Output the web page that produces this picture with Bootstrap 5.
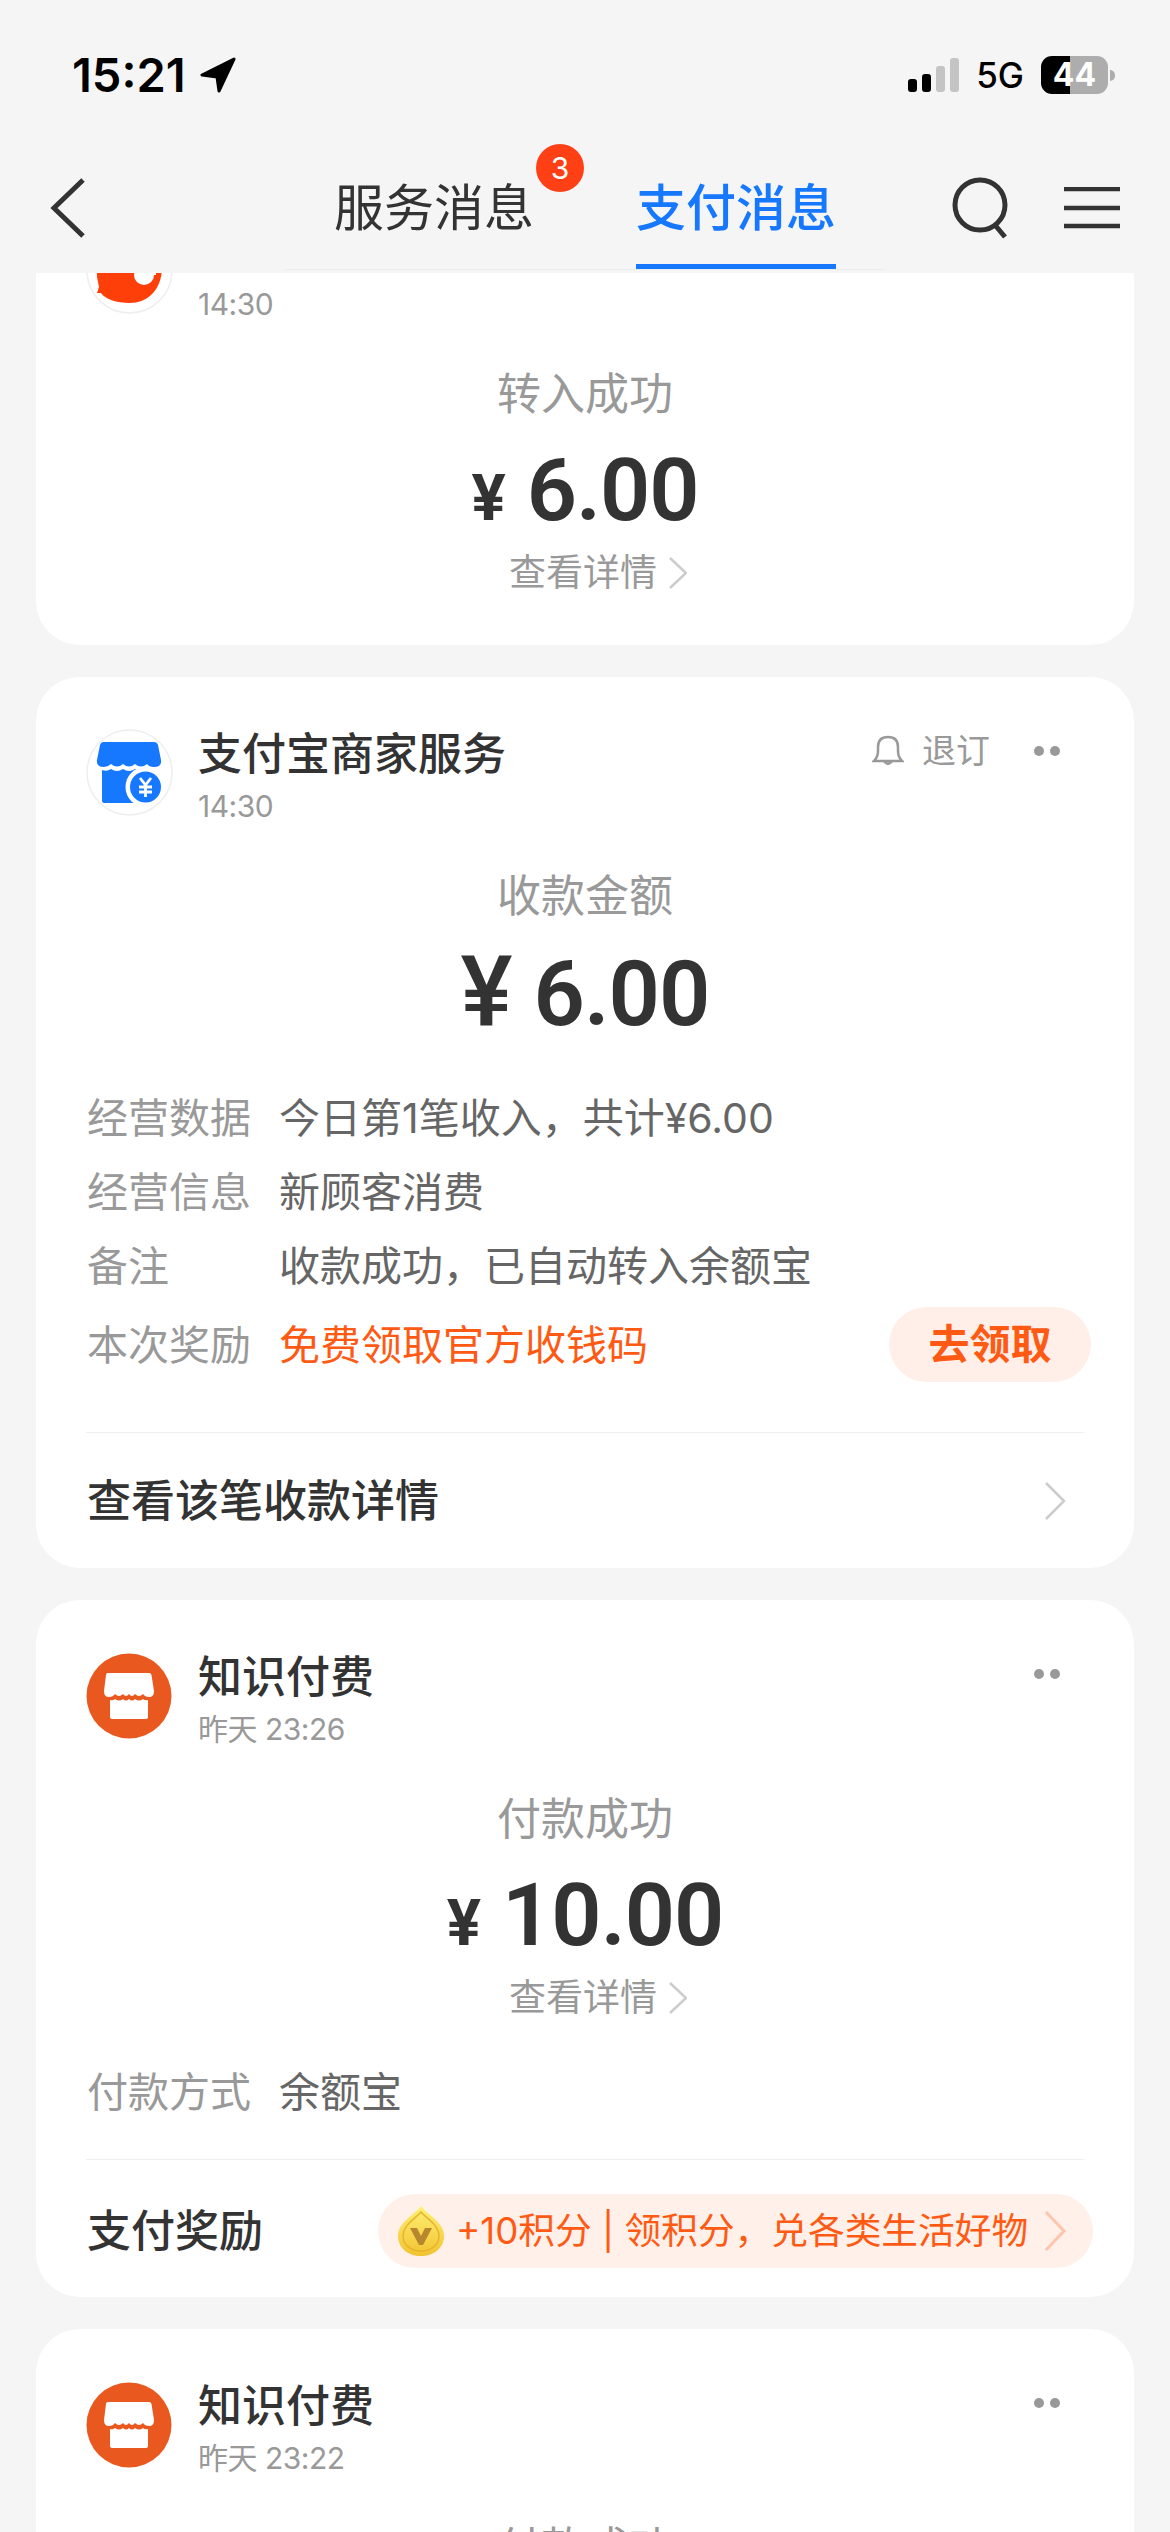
<!DOCTYPE html>
<html lang="zh-CN">
<head>
  <meta charset="UTF-8">
  <title>支付消息</title>
  <link href="https://cdn.jsdelivr.net/npm/bootstrap@5.3.0/dist/css/bootstrap.min.css" rel="stylesheet">
  <style>
    html, body {
      height: 2532px;
      overflow: hidden;
    }

    body {
      background-color: #f5f5f5;
      color: #333;
      font-family: Inter, "Noto Sans CJK SC", sans-serif;
    }

    /* status bar */
    .status-bar {
      height: 150px;
      padding: 0 55px 0 72px;
    }

    .status-time {
      font-size: 47px;
      font-weight: 600;
      color: #000;
    }

    .status-arrow {
      margin-left: 14px;
    }

    .status-net {
      font-size: 35px;
      font-weight: 500;
      color: #000;
      margin: 0 17px;
    }

    .battery {
      width: 67px;
      height: 38px;
      border-radius: 11px;
      background: linear-gradient(90deg, #000 43%, #adadad 43%);
      color: #fff;
      font-size: 32px;
      font-weight: 700;
      line-height: 38px;
      text-align: center;
    }

    .battery-cap {
      width: 5px;
      height: 11px;
      margin-left: 2px;
      background: #adadad;
      border-radius: 0 5px 5px 0;
    }

    /* top tabs */
    .top-bar {
      height: 123px;
      padding: 0 50px 8px;
      flex: none;
    }

    .top-line {
      position: absolute;
      left: 285px;
      right: 285px;
      bottom: 3px;
      height: 1px;
      background: #ececec;
    }

    .tab-group {
      position: absolute;
      left: 334px;
      top: 0;
      bottom: 0;
      gap: 102px;
    }

    .tab-item {
      font-size: 50px;
      line-height: 116px;
      height: 120px;
      font-weight: 400;
      color: #333;
      position: relative;
    }

    .tab-item.on {
      color: #1677ff;
      font-weight: 500;
      border-bottom: 6px solid #1677ff;
    }

    .tab-badge {
      position: absolute;
      left: 202px;
      top: -6px;
      width: 48px;
      height: 48px;
      border-radius: 50%;
      background: #ff3f14;
      color: #fff;
      font-size: 30px;
      font-weight: 400;
      line-height: 48px;
      text-align: center;
    }

    .top-actions {
      gap: 53px;
    }

    /* message list */
    .msg-list {
      height: 2259px;
      overflow: hidden;
      padding: 0 36px;
    }

    .msg-card {
      background: #fff;
      border-radius: 44px;
      padding: 47px 50px 0;
      margin-bottom: 32px;
    }

    .msg-card.cut {
      margin-top: -98px;
      padding-bottom: 47px;
    }

    .msg-card.tail {
      padding-bottom: 200px;
      margin-bottom: 0;
    }

    .msg-logo {
      width: 87px;
      height: 87px;
      flex: none;
      margin: 5px 25px 0 0;
    }

    .msg-title {
      font-size: 44px;
      line-height: 60px;
      font-weight: 500;
      color: #333;
      min-height: 60px;
    }

    .msg-time {
      font-size: 30px;
      line-height: 44px;
      letter-spacing: -0.5px;
      color: #999;
    }

    .msg-tools {
      color: #999;
      font-size: 34px;
      line-height: 44px;
      min-height: 44px;
      padding-right: 24px;
      margin-top: 5px;
    }

    .unsub {
      margin: 0 44px 0 18px;
    }

    .more-dots {
      gap: 6px;
    }

    .more-dots i {
      display: block;
      width: 10px;
      height: 10px;
      border-radius: 50%;
      background: #999;
    }

    .msg-head {
      font-size: 44px;
      line-height: 60px;
      color: #999;
      text-align: center;
      margin-top: 38px;
    }

    .msg-amount {
      font-family: Roboto, sans-serif;
      line-height: 110px;
      margin: 11px 0 1px;
      font-weight: 600;
      letter-spacing: -1px;
      color: #333;
      gap: 22px;
      font-size: 88px;
    }

    .msg-amount .yen {
      font-size: 64px;
      font-weight: 700;
    }

    .msg-amount.big {
      margin-bottom: -1px;
      font-size: 90px;
      gap: 22px;
    }

    .msg-amount.big .yen {
      font-size: 98px;
      font-weight: 500;
    }

    .detail-link {
      font-size: 37px;
      line-height: 50px;
      color: #999;
      gap: 12px;
      margin-top: -7px;
      padding-left: 26px;
    }

    .info-rows {
      margin-top: 32px;
    }

    .info-row {
      font-size: 41px;
      line-height: 74px;
      color: #666;
    }

    .info-label {
      width: 193px;
      flex: none;
      color: #999;
      padding-left: 1px;
    }

    .info-orange {
      color: #ff5a14;
    }

    .claim-btn {
      width: 202px;
      height: 75px;
      border-radius: 38px;
      background: #ffefe8;
      color: #ff5a14;
      font-size: 41px;
      font-weight: 700;
      line-height: 75px;
      text-align: center;
      margin-right: -7px;
    }

    .msg-foot {
      border-top: 1px solid #f0f0f0;
      color: #333;
      font-size: 44px;
      font-weight: 500;
      padding-left: 1px;
    }

    .foot-link {
      height: 136px;
      margin-top: 50px;
      padding-right: 17px;
    }

    .foot-reward {
      height: 138px;
      margin-top: 30px;
      padding-top: 4px;
    }

    .reward-pill {
      width: 715px;
      height: 74px;
      border-radius: 37px;
      background: #fff1ea;
      color: #ff5a14;
      font-size: 36.7px;
      font-weight: 400;
      padding: 0 27px 0 20px;
      margin-right: -9px;
    }

    .reward-text {
      margin-left: 12px;
    }
  </style>
</head>
<body>

<!-- Status bar -->
<div class="status-bar d-flex align-items-center justify-content-between">
  <div class="d-flex align-items-center">
    <span class="status-time">15:21</span>
    <svg class="status-arrow" width="36" height="36" viewBox="0 0 36 36"><path d="M34 2 L2 18 L17 20 L19 34 Z" fill="#000" stroke="#000" stroke-width="3" stroke-linejoin="round"/></svg>
  </div>
  <div class="d-flex align-items-center">
    <svg width="51" height="34" viewBox="0 0 51 34">
      <rect x="0" y="21" width="9" height="13" rx="3" fill="#000"/>
      <rect x="14" y="16" width="9" height="18" rx="3" fill="#000"/>
      <rect x="28" y="8" width="9" height="26" rx="3" fill="#c4c4c4"/>
      <rect x="42" y="0" width="9" height="34" rx="3" fill="#c4c4c4"/>
    </svg>
    <span class="status-net">5G</span>
    <div class="battery">44</div>
    <div class="battery-cap"></div>
  </div>
</div>

<!-- Tabs -->
<div class="top-bar d-flex align-items-center justify-content-between position-relative">
  <svg width="36" height="60" viewBox="0 0 36 60"><path d="M33 2 L4 30 L33 58" fill="none" stroke="#333" stroke-width="5"/></svg>
  <div class="tab-group d-flex">
    <div class="tab-item">服务消息<span class="tab-badge">3</span></div>
    <div class="tab-item on">支付消息</div>
  </div>
  <div class="top-actions d-flex align-items-center">
    <svg width="60" height="62" viewBox="0 0 60 62"><circle cx="29" cy="28" r="25" fill="none" stroke="#333" stroke-width="5"/><path d="M44 48 L54 60" stroke="#333" stroke-width="5" fill="none"/></svg>
    <svg width="56" height="42" viewBox="0 0 56 42"><path d="M0 2H56M0 21H56M0 39H56" stroke="#333" stroke-width="4.5" fill="none"/></svg>
  </div>
  <div class="top-line"></div>
</div>

<!-- Messages -->
<div class="msg-list">

  <div class="msg-card cut">
    <div class="d-flex">
      <svg class="msg-logo" viewBox="0 0 87 87">
        <circle cx="43.5" cy="43.5" r="42.5" fill="#fff" stroke="#eee" stroke-width="1.5"/>
        <path d="M10 0 H76 V40 C76 62 62 76 44 76 C30 76 19 72 15 66 L11 66 L13 60 L11 50 Z" fill="#ff3f0a"/>
        <circle cx="58" cy="48" r="10" fill="#fff"/>
        <path d="M50 0 H70 V48 H50 Z" fill="#fff"/>
      </svg>
      <div class="flex-grow-1">
        <div class="msg-title"></div>
        <div class="msg-time">14:30</div>
      </div>
    </div>
    <div class="msg-head">转入成功</div>
    <div class="msg-amount d-flex justify-content-center align-items-baseline"><span class="yen">¥</span><span>6.00</span></div>
    <div class="detail-link d-flex justify-content-center align-items-center">查看详情
      <svg width="18" height="32" viewBox="0 0 18 32"><path d="M1 1 L17 16 L1 31" fill="none" stroke="#ccc" stroke-width="2.5"/></svg>
    </div>
  </div>

  <div class="msg-card">
    <div class="d-flex">
      <svg class="msg-logo" viewBox="0 0 87 87">
        <circle cx="43.5" cy="43.5" r="42.5" fill="#fff" stroke="#eee" stroke-width="1.5"/>
        <path d="M17 13 H68 Q71 13 72 16 L75 31 Q76 38 68 38 Q63 38 61 35 Q55 40 49 35 Q43 40 37 35 Q31 40 25 35 Q22 38 18 38 Q10 38 11 31 L14 16 Q15 13 17 13 Z" fill="#1677ff"/>
        <path d="M16 41 Q21 43 25 40 Q31 44 37 40 Q43 44 49 40 Q55 44 61 40 L66 42 V74 H18 Q16 74 16 72 Z" fill="#1677ff"/>
        <circle cx="59.5" cy="58" r="20" fill="#fff"/>
        <circle cx="59.5" cy="58" r="15.5" fill="#1677ff"/>
        <path d="M54 49 L59.5 56 L65 49 M53 58 H66 M53 63 H66 M59.5 56 V68" fill="none" stroke="#fff" stroke-width="2.8"/>
      </svg>
      <div class="flex-grow-1">
        <div class="msg-title">支付宝商家服务</div>
        <div class="msg-time">14:30</div>
      </div>
      <div class="msg-tools d-flex align-items-center align-self-start">
        <svg width="32" height="32" viewBox="0 0 32 32"><path d="M2 26 Q6 22 6 16 V12 C6 5 10 2 16 2 C22 2 26 5 26 12 V16 Q26 22 30 26 Z M12 26 Q16 32 20 26" fill="none" stroke="#999" stroke-width="2.5"/></svg>
        <span class="unsub">退订</span>
        <div class="more-dots d-flex"><i></i><i></i></div>
      </div>
    </div>
    <div class="msg-head">收款金额</div>
    <div class="msg-amount big d-flex justify-content-center align-items-baseline"><span class="yen">¥</span><span>6.00</span></div>
    <div class="info-rows">
      <div class="info-row d-flex"><span class="info-label">经营数据</span><span>今日第1笔收入&#65292;共计¥6.00</span></div>
      <div class="info-row d-flex"><span class="info-label">经营信息</span><span>新顾客消费</span></div>
      <div class="info-row d-flex"><span class="info-label">备注</span><span>收款成功&#65292;已自动转入余额宝</span></div>
      <div class="info-row d-flex align-items-center mt-1"><span class="info-label">本次奖励</span><span class="info-orange flex-grow-1">免费领取官方收钱码</span><span class="claim-btn">去领取</span></div>
    </div>
    <div class="msg-foot foot-link d-flex align-items-center justify-content-between">
      <span>查看该笔收款详情</span>
      <svg width="24" height="40" viewBox="0 0 24 40"><path d="M3 2 L21 20 L3 38" fill="none" stroke="#ccc" stroke-width="2.5"/></svg>
    </div>
  </div>

  <div class="msg-card">
    <div class="d-flex">
      <svg class="msg-logo" viewBox="0 0 87 87"><circle cx="43" cy="44" r="42.5" fill="#e9581f"/><path d="M22 21 H63 Q65 21 65.5 23 L68 39 Q68 45 63 45 Q59 45 57 42 Q53 46 49 42 Q46 46 43 42 Q40 46 37 42 Q33 46 29 42 Q27 45 23 45 Q18 45 18 39 L20 23 Q20 21 22 21 Z M24 48 Q27 49 29 47 Q33 50 37 47 Q40 50 43 47 Q46 50 49 47 Q53 50 57 47 Q59 49 62 48 V65 Q62 67 60 67 H26 Q24 67 24 65 Z" fill="#fff"/></svg>
      <div class="flex-grow-1">
        <div class="msg-title">知识付费</div>
        <div class="msg-time">昨天 23:26</div>
      </div>
      <div class="msg-tools d-flex align-items-center align-self-start"><div class="more-dots d-flex"><i></i><i></i></div></div>
    </div>
    <div class="msg-head">付款成功</div>
    <div class="msg-amount d-flex justify-content-center align-items-baseline"><span class="yen">¥</span><span>10.00</span></div>
    <div class="detail-link d-flex justify-content-center align-items-center">查看详情
      <svg width="18" height="32" viewBox="0 0 18 32"><path d="M1 1 L17 16 L1 31" fill="none" stroke="#ccc" stroke-width="2.5"/></svg>
    </div>
    <div class="info-rows">
      <div class="info-row d-flex"><span class="info-label">付款方式</span><span>余额宝</span></div>
    </div>
    <div class="msg-foot foot-reward d-flex align-items-center justify-content-between">
      <span>支付奖励</span>
      <div class="reward-pill d-flex align-items-center">
        <svg width="46" height="50" viewBox="0 0 46 50">
          <defs><linearGradient id="coinFill" x1="0" y1="0" x2="0" y2="1"><stop offset="0" stop-color="#fff176"/><stop offset="1" stop-color="#f2c230"/></linearGradient></defs>
          <path d="M23 0 C30 9 46 16 46 30 C46 42 36 50 23 50 C10 50 0 42 0 30 C0 16 16 9 23 0 Z" fill="url(#coinFill)"/>
          <path d="M23 6 C29 13 41 19 41 30 C41 39 33 45 23 45 C13 45 5 39 5 30 C5 19 17 13 23 6 Z" fill="none" stroke="#e6b52c" stroke-width="1.5"/>
          <path d="M12 22 H19 L23 30 L27 22 H34 L25 39 H21 Z" fill="#b8862c"/>
        </svg>
        <span class="reward-text flex-grow-1">+10积分 | 领积分&#65292;兑各类生活好物</span>
        <svg width="22" height="42" viewBox="0 0 22 42"><path d="M2 2 L20 21 L2 40" fill="none" stroke="#ffc4ac" stroke-width="3"/></svg>
      </div>
    </div>
  </div>

  <div class="msg-card tail">
    <div class="d-flex">
      <svg class="msg-logo" viewBox="0 0 87 87"><circle cx="43" cy="44" r="42.5" fill="#e9581f"/><path d="M22 21 H63 Q65 21 65.5 23 L68 39 Q68 45 63 45 Q59 45 57 42 Q53 46 49 42 Q46 46 43 42 Q40 46 37 42 Q33 46 29 42 Q27 45 23 45 Q18 45 18 39 L20 23 Q20 21 22 21 Z M24 48 Q27 49 29 47 Q33 50 37 47 Q40 50 43 47 Q46 50 49 47 Q53 50 57 47 Q59 49 62 48 V65 Q62 67 60 67 H26 Q24 67 24 65 Z" fill="#fff"/></svg>
      <div class="flex-grow-1">
        <div class="msg-title">知识付费</div>
        <div class="msg-time">昨天 23:22</div>
      </div>
      <div class="msg-tools d-flex align-items-center align-self-start"><div class="more-dots d-flex"><i></i><i></i></div></div>
    </div>
    <div class="msg-head">付款成功</div>
  </div>

</div>

</body>
</html>
